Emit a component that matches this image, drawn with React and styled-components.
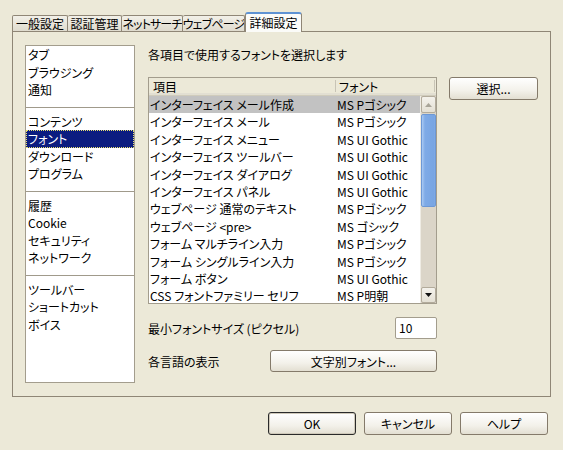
import React from 'react';
import styled, { createGlobalStyle } from 'styled-components';

const Global = createGlobalStyle`
  html, body { margin: 0; padding: 0; background: #ece9d8; }
  body {
    width: 563px; height: 450px; overflow: hidden;
    font-family: "Noto Sans CJK JP", "Noto Sans", sans-serif;
    font-size: 12px; color: #000;
    font-feature-settings: "palt";
  }
  * { box-sizing: border-box; }
`;

const Window = styled.div`
  width: 563px;
  height: 450px;
  padding: 10px 12px 0 12px;
  display: flex;
  flex-direction: column;
`;

const TabStrip = styled.div`
  display: flex;
  align-items: flex-end;
  height: 21px;
`;

const Tab = styled.div`
  position: relative;
  width: ${p => p.$w}px;
  height: ${p => (p.$active ? 20 : 16)}px;
  margin-bottom: ${p => (p.$active ? -1 : 0)}px;
  z-index: ${p => (p.$active ? 2 : 1)};
  display: flex;
  align-items: center;
  justify-content: center;
  line-height: 14px;
  padding-top: ${p => (p.$active ? 0 : 1)}px;
  white-space: nowrap;
  overflow: hidden;
  letter-spacing: ${p => p.$ls || 0}px;
  border: 1px solid #8f8676;
  border-bottom: ${p => (p.$active ? 'none' : '0')};
  border-left-width: ${p => (p.$first || p.$active ? 1 : 0)}px;
  border-radius: ${p => (p.$active ? '3px 3px 0 0' : '2px 2px 0 0')};
  border-top: ${p => (p.$active ? '2px solid #5f93d3' : '1px solid #8f8676')};
  background: ${p => (p.$active ? '#fbfbf8' : 'linear-gradient(#f2f0e8, #dfdbce)')};
`;

const Panel = styled.div`
  width: 539px;
  height: 366px;
  border: 1px solid #8f8676;
  background: #ece9d8;
  padding: 13px 12px 13px 12px;
  display: flex;
  gap: 13px;
`;

const CategoryList = styled.div`
  width: 110px;
  height: 338px;
  background: #fff;
  border: 1px solid #a39d8d;
  display: flex;
  flex-direction: column;
`;

const Group = styled.div`
  padding: ${p => (p.$first ? 0 : 5)}px 0 8px 0;
  border-bottom: ${p => (p.$last ? 'none' : '1px solid #a09a8b')};
`;

const CatItem = styled.div`
  height: 17.5px;
  line-height: 17.5px;
  padding-left: 2px;
  white-space: nowrap;
  color: ${p => (p.$sel ? '#fff' : '#000')};
  background: ${p => (p.$sel ? '#0b1c80' : 'transparent')};
  outline: ${p => (p.$sel ? '1px dotted #e8e070' : 'none')};
  outline-offset: -1px;
`;

const Content = styled.div`
  flex: 1;
  display: flex;
  flex-direction: column;
`;

const Prompt = styled.div`
  height: 20px;
  line-height: 20px;
  margin-bottom: 12px;
`;

const ListRow = styled.div`
  display: flex;
  align-items: flex-start;
  gap: 12px;
`;

const ListView = styled.div`
  width: 289px;
  height: 227px;
  border: 1px solid #a39d8d;
  background: #fff;
  display: flex;
  flex-direction: column;
  overflow: hidden;
`;

const Header = styled.div`
  height: 18px;
  display: flex;
  background: #ece9d8;
  border-bottom: 1px solid #d0ccbc;
  box-shadow: inset 0 -2px 0 #e2dfd2;
`;

const HeadCell = styled.div`
  width: ${p => p.$w}px;
  padding-left: ${p => p.$pl}px;
  line-height: 17px;
  border-right: 1px solid #c8c4b6;
  margin: 2px 0 3px 0;
  display: flex;
  align-items: center;
`;

const Body = styled.div`
  flex: 1;
  display: flex;
  min-height: 0;
`;

const Rows = styled.div`
  flex: 1;
  overflow: hidden;
`;

const Row = styled.div`
  height: 17.4px;
  line-height: 16px;
  display: flex;
  white-space: nowrap;
  background: ${p => (p.$sel ? '#c2c2c2' : 'transparent')};
`;

const Cell = styled.div`
  width: ${p => p.$w}px;
  padding-left: ${p => p.$pl}px;
  padding-top: 1px;
  overflow: hidden;
`;

const ScrollBar = styled.div`
  width: 16px;
  display: flex;
  flex-direction: column;
  background: #dbd5c8;
  border-left: 1px solid #efece4;
`;

const ScrollBtn = styled.div`
  height: ${p => p.$h}px;
  display: flex;
  align-items: center;
  justify-content: center;
  background: linear-gradient(#f4f2ec, #e4e0d4);
  border: 1px solid #b2ab9b;
  border-radius: 2px;
`;

const Thumb = styled.div`
  height: 93px;
  margin: 1px 0;
  background: linear-gradient(90deg, #a9c9f2 0px, #7eaae6 3px, #78a5e3 12px, #9cbfee 15px);
  border: 1px solid #6c98d6;
  border-radius: 2px;
`;

const Track = styled.div`
  flex: 1;
`;

const Button = styled.div`
  width: ${p => p.$w}px;
  height: ${p => p.$h || 23}px;
  display: flex;
  align-items: center;
  justify-content: center;
  white-space: nowrap;
  border: 1px solid ${p => (p.$default ? '#2a2a2a' : '#847a6a')};
  border-radius: 3px;
  background: linear-gradient(#ffffff, #f3f1ea 60%, #e3dfd2);
  box-shadow: ${p => (p.$default ? 'inset 0 0 0 1px #cfc9ba' : 'none')};
`;

const FieldRow = styled.div`
  width: 289px;
  height: 22px;
  display: flex;
  align-items: center;
  justify-content: space-between;
  margin-top: ${p => p.$mt}px;
`;

const NumberInput = styled.div`
  width: 42px;
  height: 22px;
  background: #fff;
  border: 1px solid #a39d8d;
  border-radius: 2px;
  padding-left: 3px;
  line-height: 20px;
`;

const Footer = styled.div`
  display: flex;
  justify-content: flex-end;
  gap: 8px;
  padding-right: 3px;
  margin-top: 15px;
`;

const Arrow = ({ dir, color }) => (
  <svg width="7" height="4" viewBox="0 0 7 4">
    {dir === 'up'
      ? <polygon points="0,4 7,4 3.5,0" fill={color} />
      : <polygon points="0,0 7,0 3.5,4" fill={color} />}
  </svg>
);

const tabs = [
  { t: '一般設定', w: 56 },
  { t: '認証管理', w: 54 },
  { t: 'ネットサーチ', w: 61, ls: -0.9 },
  { t: 'ウェブページ', w: 62, ls: -0.8 },
  { t: '詳細設定', w: 57, active: true },
];

const groups = [
  ['タブ', 'ブラウジング', '通知'],
  ['コンテンツ', 'フォント', 'ダウンロード', 'プログラム'],
  ['履歴', 'Cookie', 'セキュリティ', 'ネットワーク'],
  ['ツールバー', 'ショートカット', 'ボイス'],
];

const rows = [
  ['インターフェイス メール作成', 'MS Pゴシック'],
  ['インターフェイス メール', 'MS Pゴシック'],
  ['インターフェイス メニュー', 'MS UI Gothic'],
  ['インターフェイス ツールバー', 'MS UI Gothic'],
  ['インターフェイス ダイアログ', 'MS UI Gothic'],
  ['インターフェイス パネル', 'MS UI Gothic'],
  ['ウェブページ 通常のテキスト', 'MS Pゴシック'],
  ['ウェブページ <pre>', 'MS ゴシック'],
  ['フォーム マルチライン入力', 'MS Pゴシック'],
  ['フォーム シングルライン入力', 'MS Pゴシック'],
  ['フォーム ボタン', 'MS UI Gothic'],
  ['CSS フォントファミリー セリフ', 'MS P明朝'],
];

export default function App() {
  return (
    <>
      <Global />
      <Window>
        <TabStrip>
          {tabs.map((t, i) => (
            <Tab key={t.t} $w={t.w} $ls={t.ls} $active={t.active} $first={i === 0}>{t.t}</Tab>
          ))}
        </TabStrip>
        <Panel>
          <CategoryList>
            {groups.map((g, gi) => (
              <Group key={gi} $first={gi === 0} $last={gi === groups.length - 1}>
                {g.map(item => (
                  <CatItem key={item} $sel={item === 'フォント'}>{item}</CatItem>
                ))}
              </Group>
            ))}
          </CategoryList>
          <Content>
            <Prompt>各項目で使用するフォントを選択します</Prompt>
            <ListRow>
              <ListView>
                <Header>
                  <HeadCell $w={187} $pl={4}>項目</HeadCell>
                  <HeadCell $w={99} $pl={3}>フォント</HeadCell>
                </Header>
                <Body>
                  <Rows>
                    {rows.map((r, i) => (
                      <Row key={i} $sel={i === 0}>
                        <Cell $w={187} $pl={1}>{r[0]}</Cell>
                        <Cell $w={84} $pl={1}>{r[1]}</Cell>
                      </Row>
                    ))}
                  </Rows>
                  <ScrollBar>
                    <ScrollBtn $h={17}><Arrow dir="up" color="#a8a498" /></ScrollBtn>
                    <Thumb />
                    <Track />
                    <ScrollBtn $h={16}><Arrow dir="down" color="#111" /></ScrollBtn>
                  </ScrollBar>
                </Body>
              </ListView>
              <Button $w={89}>選択...</Button>
            </ListRow>
            <FieldRow $mt={13}>
              <span>最小フォントサイズ (ピクセル)</span>
              <NumberInput>10</NumberInput>
            </FieldRow>
            <FieldRow $mt={11}>
              <span>各言語の表示</span>
              <Button $w={167} $h={22}>文字別フォント...</Button>
            </FieldRow>
          </Content>
        </Panel>
        <Footer>
          <Button $w={88} $default>OK</Button>
          <Button $w={88}>キャンセル</Button>
          <Button $w={88}>ヘルプ</Button>
        </Footer>
      </Window>
    </>
  );
}
